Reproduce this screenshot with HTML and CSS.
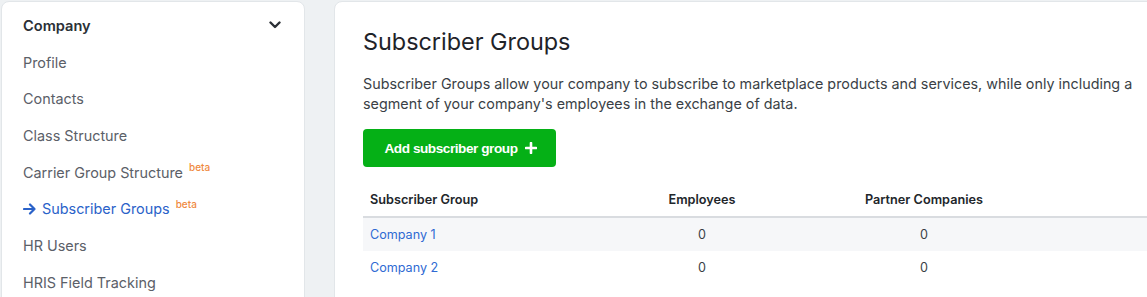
FILE: index.html
```html
<!DOCTYPE html>
<html>
<head>
<meta charset="utf-8">
<link rel="stylesheet" href="styles.css">
</head>
<body>
<div class="page">
  <aside class="sidebar">
    <div class="side-head">
      <span>Company</span>
      <svg class="chev" width="12" height="8" viewBox="0 0 12 8"><path d="M1.5 1.5 L6 6 L10.5 1.5" fill="none" stroke="#2b3036" stroke-width="2.4" stroke-linecap="round" stroke-linejoin="round"/></svg>
    </div>
    <ul class="nav">
      <li class="nav-item">Profile</li>
      <li class="nav-item">Contacts</li>
      <li class="nav-item">Class Structure</li>
      <li class="nav-item">Carrier Group Structure <sup class="beta">beta</sup></li>
      <li class="nav-item active"><svg class="arrow" width="13" height="12" viewBox="0 0 13 12"><path d="M1 6 H11.5 M7 1.5 L11.5 6 L7 10.5" fill="none" stroke="#2a62c9" stroke-width="2.2" stroke-linecap="round" stroke-linejoin="round"/></svg>Subscriber Groups <sup class="beta">beta</sup></li>
      <li class="nav-item">HR Users</li>
      <li class="nav-item">HRIS Field Tracking</li>
    </ul>
  </aside>
  <main class="main">
    <h1 class="title">Subscriber Groups</h1>
    <p class="desc">Subscriber Groups allow your company to subscribe to marketplace products and services, while only including a segment of your company's employees in the exchange of data.</p>
    <button class="btn">Add subscriber group <svg width="12" height="12" viewBox="0 0 12 12"><path d="M6 1 V11 M1 6 H11" stroke="#fff" stroke-width="2.6" stroke-linecap="round"/></svg></button>
    <div class="table">
      <div class="row head">
        <div class="cell">Subscriber Group</div>
        <div class="cell c">Employees</div>
        <div class="cell c">Partner Companies</div>
        <div class="cell"></div>
      </div>
      <div class="row alt">
        <div class="cell link">Company 1</div>
        <div class="cell c">0</div>
        <div class="cell c">0</div>
        <div class="cell"></div>
      </div>
      <div class="row">
        <div class="cell link">Company 2</div>
        <div class="cell c">0</div>
        <div class="cell c">0</div>
        <div class="cell"></div>
      </div>
    </div>
  </main>
</div>
</body>
</html>
```

FILE: styles.css
```css
html, body {
  margin: 0;
  padding: 0;
}
body {
  background: #eef1f3;
  font-family: Inter, "Noto Sans", sans-serif;
  width: 1147px;
  height: 297px;
  overflow: hidden;
}
.page {
  display: flex;
  align-items: flex-start;
  padding: 1px 0 0 1px;
  gap: 29px;
  height: 296px;
  overflow: hidden;
}
.sidebar {
  width: 304px;
  height: 320px;
  flex: none;
  background: #fff;
  border: 1px solid #e2e6e9;
  border-radius: 8px;
  box-sizing: border-box;
}
.side-head {
  display: flex;
  justify-content: space-between;
  align-items: center;
  height: 42px;
  box-sizing: border-box;
  padding: 5px 23px 0 21px;
  font-size: 14.6px;
  font-weight: 600;
  color: #2b3036;
}
.chev { margin-top: -1px; }
.nav {
  list-style: none;
  margin: 0;
  padding: 0 0 0 21px;
}
.nav-item {
  height: 36.65px;
  display: flex;
  align-items: center;
  font-size: 14.4px;
  color: #5b6068;
}
.nav-item.active {
  color: #2a62c9;
}
.arrow {
  margin-right: 6px;
}
.beta {
  font-size: 10px;
  color: #ef8a3f;
  align-self: flex-start;
  margin-top: 7px;
  margin-left: 6px;
  font-weight: 500;
}
.main {
  flex: none;
  width: 880px;
  height: 320px;
  background: #fff;
  border: 1px solid #e2e6e9;
  border-radius: 8px;
  box-sizing: border-box;
  padding: 0 0 0 28px;
}
.title {
  margin: 26px 0 0;
  font-size: 23.4px;
  font-weight: 400;
  color: #1f2329;
  line-height: 28px;
}
.desc {
  margin: 18px 0 0;
  font-size: 14.35px;
  line-height: 19.5px;
  color: #3a3f46;
  width: 790px;
}
.btn {
  margin-top: 16px;
  display: flex;
  align-items: center;
  gap: 7px;
  height: 38px;
  width: 193px;
  justify-content: center;
  padding: 0 0 0 2px;
  border: none;
  border-radius: 4px;
  background: #05b016;
  color: #fff;
  font-family: "Liberation Sans", Arial, sans-serif;
  font-weight: 700;
  font-size: 13.6px;
  letter-spacing: -0.45px;
}
.table {
  margin-top: 25px;
  width: 820px;
  font-size: 12.6px;
}
.row {
  display: grid;
  grid-template-columns: 255px 168px 276px 1fr;
  height: 32px;
  align-items: center;
}
.row.head {
  height: 24px;
  align-items: start;
  font-weight: 600;
  font-size: 12.7px;
  color: #22262b;
  border-bottom: 2px solid #d9dce0;
}
.row.alt {
  background: #f6f7f9;
  height: 33px;
}
.cell {
  padding-left: 7px;
  color: #3a3f46;
}
.head .cell { color: #22262b; }
.cell.c {
  text-align: center;
  padding-left: 0;
}
.cell.link {
  color: #2f6ad3;
}
```
